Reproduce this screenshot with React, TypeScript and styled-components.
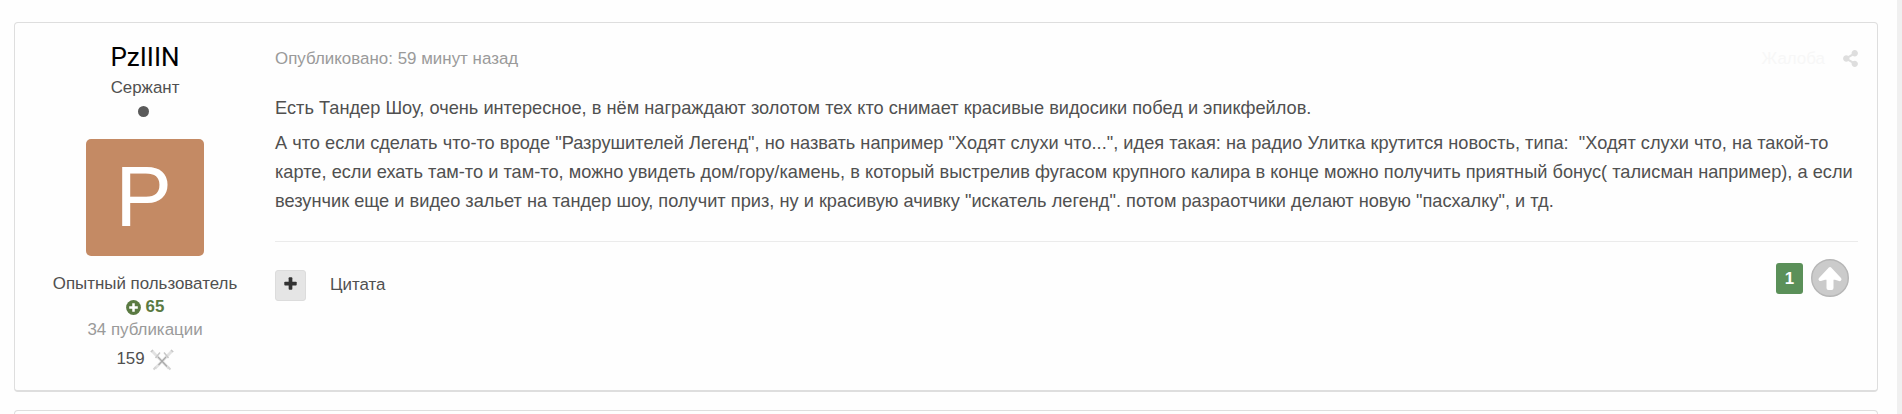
import React from "react";
import styled, { createGlobalStyle } from "styled-components";
import { FaShareAlt } from "react-icons/fa";

const GlobalStyle = createGlobalStyle`
  * {
    box-sizing: border-box;
  }
  body {
    margin: 0;
    background: #fefefe;
    color: #505050;
    font-family: "Liberation Sans", Arial, sans-serif;
    font-size: 16.9px;
    overflow: hidden;
  }
`;

const Page = styled.div`
  display: flex;
  height: 414px;
  overflow: hidden;
`;
const Feed = styled.main`
  flex: 1;
  padding: 22px 19px 0 14px;
`;
const ScrollTrack = styled.div`
  width: 5px;
  background: #f0f0f0;
`;
const Card = styled.article`
  display: flex;
  height: 370px;
  margin-bottom: 18px;
  border: 1px solid #dedede;
  border-bottom-width: 2px;
  border-radius: 4px;
  background: #fefefe;
`;

const Author = styled.aside`
  display: flex;
  flex-direction: column;
  align-items: center;
  width: 260px;
  padding-top: 17px;
`;
const AuthorName = styled.h3`
  margin: 0;
  color: #000;
  font-family: Roboto, sans-serif;
  font-size: 26px;
  font-weight: 400;
  line-height: 34px;
`;
const AuthorLine = styled.div<{ $muted?: boolean }>`
  line-height: 23.4px;
  color: ${({ $muted }) => ($muted ? "#9a9a9a" : "#505050")};
`;
const Rank = styled(AuthorLine)`
  margin-top: 2px;
`;
const Pip = styled.div`
  width: 11px;
  height: 11px;
  margin: 7px 3px 22px 0;
  border-radius: 50%;
  background: #5a5a5a;
`;
const Avatar = styled.div`
  width: 118px;
  height: 117px;
  margin-bottom: 16px;
  padding-right: 3px;
  border-radius: 5px;
  background: #c48a64;
  color: #fff;
  font-size: 85px;
  line-height: 116px;
  text-align: center;
`;
const Reputation = styled.div`
  display: flex;
  align-items: center;
  gap: 5px;
  color: #5a7a42;
  font-weight: bold;
  line-height: 22.4px;
`;
const Battles = styled.div`
  display: flex;
  align-items: flex-start;
  gap: 5px;
  margin-top: 5px;
  line-height: 24px;

  svg {
    margin-top: 2px;
  }
`;

const Content = styled.section`
  flex: 1;
  padding: 23px 19px 0 0;
`;
const PostHeader = styled.header`
  display: flex;
  align-items: center;
  height: 26px;
  margin-bottom: 22px;
  color: #9a9a9a;
  letter-spacing: 0.02px;
`;
const Report = styled.a`
  margin-left: auto;
  margin-right: 17px;
  color: #f7f7f7;
`;
const Share = styled.a`
  display: flex;
  margin-right: -1px;
  padding-bottom: 1px;
  color: #dedede;
`;
const PostText = styled.p`
  margin: 0 0 6px;
  color: #505050;
  font-size: 18.2px;
  letter-spacing: 0.014px;
  line-height: 29.12px;
`;
const PostFooter = styled.footer`
  display: flex;
  align-items: flex-start;
  margin-top: 24px;
  border-top: 1px solid #ebebeb;
  padding: 16px 9px 0 0;
`;
const QuoteButton = styled.button`
  display: flex;
  align-items: center;
  justify-content: center;
  width: 31px;
  height: 31px;
  margin: 12px 24px 0 0;
  padding: 0 0 4px;
  border: 1px solid #dcdcdc;
  border-radius: 3px;
  background: #e5e5e5;
  color: #333;
`;
const QuoteLink = styled.a`
  margin-top: 15px;
  line-height: 23px;
`;
const Votes = styled.div`
  display: flex;
  align-items: center;
  gap: 8px;
  margin-top: 1px;
  margin-left: auto;
`;
const VoteCount = styled.span`
  width: 27px;
  height: 31px;
  margin-top: 2px;
  border-radius: 3px;
  background: #5b9059;
  color: #fff;
  font-weight: bold;
  line-height: 31px;
  text-align: center;
`;

const PlusIcon = () => (
  <svg width="13" height="13" viewBox="0 0 13 13" fill="currentColor">
    <rect x="0.3" y="4.7" width="12.4" height="3.7" rx="0.9" />
    <rect x="4.65" y="0.3" width="3.7" height="12.4" rx="0.9" />
  </svg>
);

const PlusCircleIcon = () => (
  <svg width="15" height="15" viewBox="0 0 15 15">
    <circle cx="7.5" cy="7.5" r="7.4" fill="currentColor" />
    <path d="M3.2 7.5H11.8M7.5 3.2V11.8" stroke="#fefefe" strokeWidth="2.5" />
  </svg>
);

const SwordsIcon = () => (
  <svg width="24" height="22" viewBox="0 0 24 22" fill="none">
    <path d="M1.5 1.5L19 19.5M22.5 1.5L5 19.5" stroke="#e2e2e2" strokeWidth="2.8" />
    <path d="M8 8L17 17.5M16 8L8.5 16" stroke="#a8a8a8" strokeWidth="1.1" />
    <path
      d="M5.5 9L10 3.5M18.5 9L14 3.5M0.8 3L3 1M23.2 3L21 1"
      stroke="#c8c8c8"
      strokeWidth="1.5"
    />
    <path d="M3.5 20.5L6 18M20.5 20.5L18 18" stroke="#d4d4d4" strokeWidth="2" />
  </svg>
);

const UpvoteIcon = () => (
  <svg width="38" height="38" viewBox="0 0 38 38">
    <circle cx="19" cy="19" r="18.3" fill="#cbcbcb" stroke="#b6b6b6" strokeWidth="1.4" />
    <path
      d="M19 10L9.4 20.2L17.4 17.6V29H20.6V17.6L28.6 20.2Z"
      fill="#fff"
      stroke="#fff"
      strokeWidth="3.8"
      strokeLinejoin="round"
    />
  </svg>
);

const paragraphs = [
  [
    "Есть Тандер Шоу, очень интересное, в нём награждают золотом тех кто снимает красивые видосики побед и эпикфейлов.",
  ],
  [
    'А что если сделать что-то вроде "Разрушителей Легенд", но назвать например "Ходят слухи что...", идея такая: на радио Улитка крутится новость, типа:\u00a0 "Ходят слухи что, на такой-то',
    "карте, если ехать там-то и там-то, можно увидеть дом/гору/камень, в который выстрелив фугасом крупного калира в конце можно получить приятный бонус( талисман например), а если",
    'везунчик еще и видео зальет на тандер шоу, получит приз, ну и красивую ачивку "искатель легенд". потом разраотчики делают новую "пасхалку", и тд.',
  ],
];

export default function App() {
  return (
    <Page>
      <GlobalStyle />
      <Feed>
        <Card>
          <Author>
            <AuthorName>PzIIIN</AuthorName>
            <Rank>Сержант</Rank>
            <Pip />
            <Avatar>P</Avatar>
            <AuthorLine>Опытный пользователь</AuthorLine>
            <Reputation>
              <PlusCircleIcon />
              65
            </Reputation>
            <AuthorLine $muted>34 публикации</AuthorLine>
            <Battles>
              159
              <SwordsIcon />
            </Battles>
          </Author>
          <Content>
            <PostHeader>
              <span>Опубликовано: 59 минут назад</span>
              <Report>Жалоба</Report>
              <Share>
                <FaShareAlt size={17} />
              </Share>
            </PostHeader>
            {paragraphs.map((lines) => (
              <PostText key={lines[0]}>
                {lines.map((line, i) => (
                  <React.Fragment key={line}>
                    {i > 0 && <br />}
                    {line}
                  </React.Fragment>
                ))}
              </PostText>
            ))}
            <PostFooter>
              <QuoteButton>
                <PlusIcon />
              </QuoteButton>
              <QuoteLink>Цитата</QuoteLink>
              <Votes>
                <VoteCount>1</VoteCount>
                <UpvoteIcon />
              </Votes>
            </PostFooter>
          </Content>
        </Card>
        <Card />
      </Feed>
      <ScrollTrack />
    </Page>
  );
}
